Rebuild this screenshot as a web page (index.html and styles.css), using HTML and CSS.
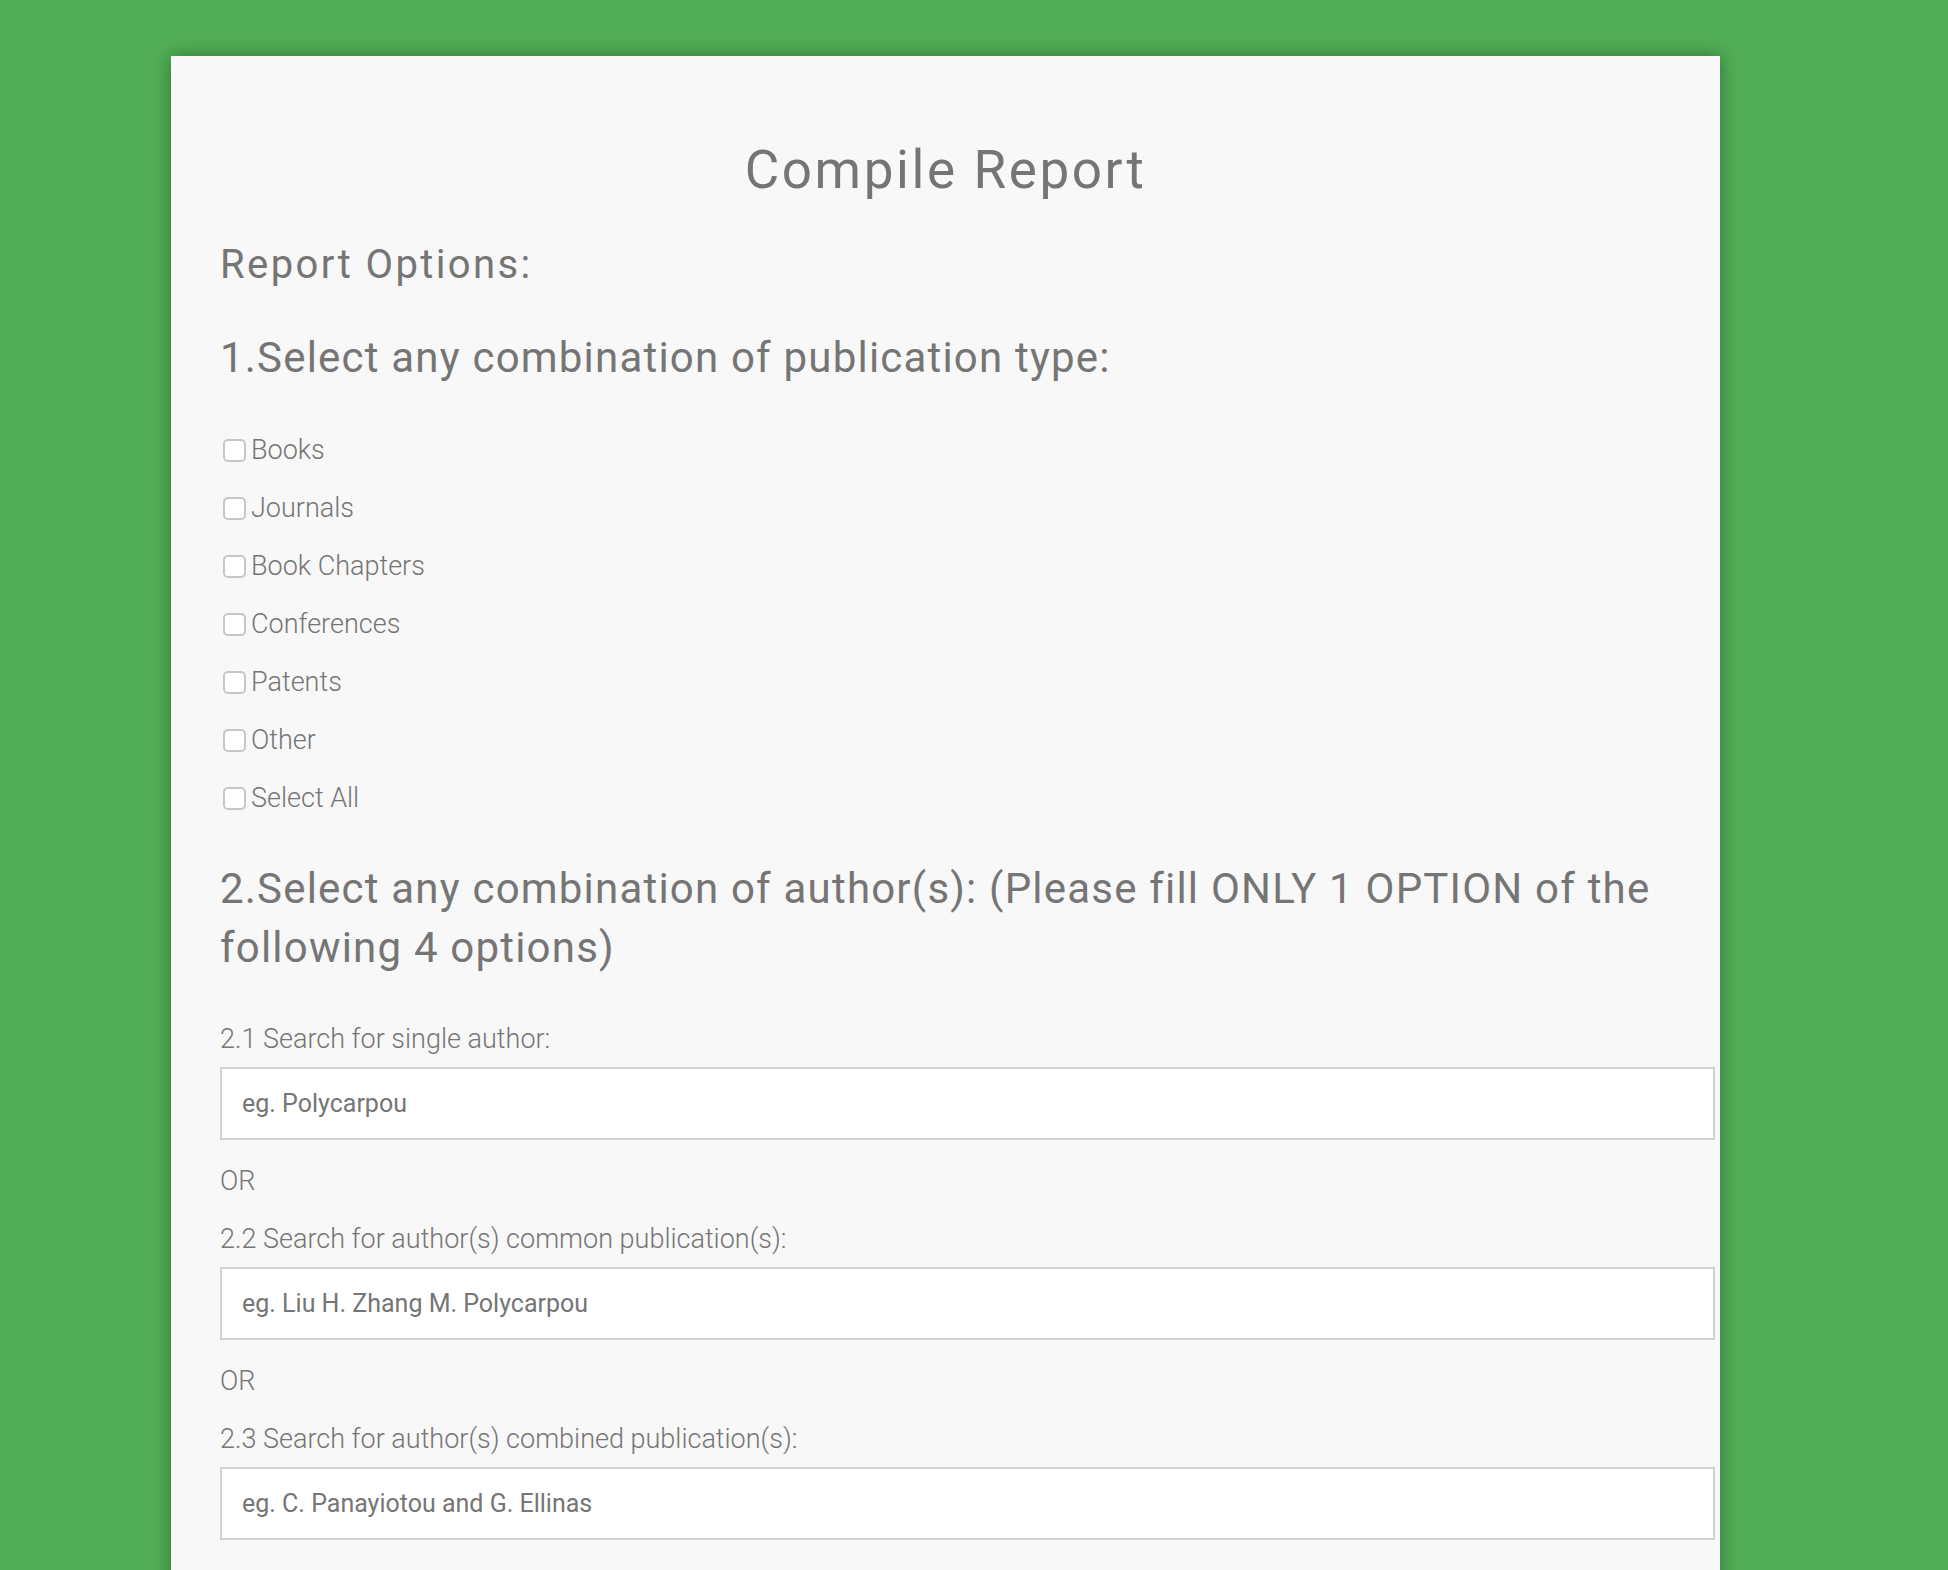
FILE: index.html
```html
<!DOCTYPE html>
<html>
<head>
<meta charset="utf-8">
<title>Compile Report</title>
<link rel="stylesheet" href="styles.css">
</head>
<body>
<div class="card">
  <h1 class="title">Compile Report</h1>
  <h2 class="subtitle">Report Options:</h2>
  <h3 class="section">1.Select any combination of publication type:</h3>
  <div class="checks">
    <label class="check"><input type="checkbox"><span>Books</span></label>
    <label class="check"><input type="checkbox"><span>Journals</span></label>
    <label class="check"><input type="checkbox"><span>Book Chapters</span></label>
    <label class="check"><input type="checkbox"><span>Conferences</span></label>
    <label class="check"><input type="checkbox"><span>Patents</span></label>
    <label class="check"><input type="checkbox"><span>Other</span></label>
    <label class="check"><input type="checkbox"><span>Select All</span></label>
  </div>
  <h3 class="section section-2">2.Select any combination of author(s): (Please fill ONLY 1 OPTION of the following 4 options)</h3>
  <div class="field first">
    <div class="field-label">2.1 Search for single author:</div>
    <input class="text" type="text" placeholder="eg. Polycarpou">
  </div>
  <div class="or">OR</div>
  <div class="field">
    <div class="field-label">2.2 Search for author(s) common publication(s):</div>
    <input class="text" type="text" placeholder="eg. Liu H. Zhang M. Polycarpou">
  </div>
  <div class="or">OR</div>
  <div class="field">
    <div class="field-label">2.3 Search for author(s) combined publication(s):</div>
    <input class="text" type="text" placeholder="eg. C. Panayiotou and G. Ellinas">
  </div>
</div>
</body>
</html>
```
FILE: styles.css
```css
html, body {
  margin: 0;
  padding: 0;
}
body {
  background: #51ae56;
  font-family: Roboto, "Liberation Sans", sans-serif;
  color: #757575;
  padding-top: 56px;
  height: 1514px;
  overflow: hidden;
}
.card {
  margin-left: 171px;
  width: 1451px;
  min-height: 1600px;
  background: #f8f8f8;
  padding: 79px 49px 0 49px;
  box-shadow: 0 0 18px rgba(0, 0, 0, 0.35);
}
.title {
  margin: 0;
  font-size: 53px;
  line-height: 70px;
  font-weight: 400;
  text-align: center;
  letter-spacing: 2.6px;
}
.subtitle {
  margin: 34px 0 0 0;
  font-size: 40px;
  line-height: 52px;
  font-weight: 400;
  letter-spacing: 2.4px;
}
.section {
  margin: 35px 0 0 0;
  font-size: 42px;
  line-height: 64px;
  font-weight: 400;
  letter-spacing: 1.2px;
}
.section-2 {
  margin-top: 32px;
  line-height: 59px;
}
.checks {
  margin-top: 31px;
  display: flex;
  flex-direction: column;
}
.check {
  display: flex;
  align-items: center;
  height: 58px;
  font-size: 27px;
  font-weight: 300;
}
.check input {
  appearance: none;
  -webkit-appearance: none;
  margin: 0 5px 0 3px;
  width: 23px;
  height: 23px;
  border: 2px solid #c6c6c6;
  border-radius: 5px;
  background: #fff;
  box-sizing: border-box;
}
.field {
  margin-top: 26px;
}
.field.first {
  margin-top: 46px;
}
.field-label {
  font-size: 27px;
  line-height: 32px;
  font-weight: 300;
}
.text {
  display: block;
  margin-top: 12px;
  width: 100%;
  height: 69px;
  padding: 0 20px;
  border: 2px solid #d2d2d2;
  background: #fff;
  font-family: Roboto, "Liberation Sans", sans-serif;
  font-size: 25px;
  color: #757575;
  outline: none;
}
.text::placeholder {
  color: #757575;
}
.or {
  margin-top: 25px;
  font-size: 27px;
  line-height: 32px;
  font-weight: 300;
}
```
